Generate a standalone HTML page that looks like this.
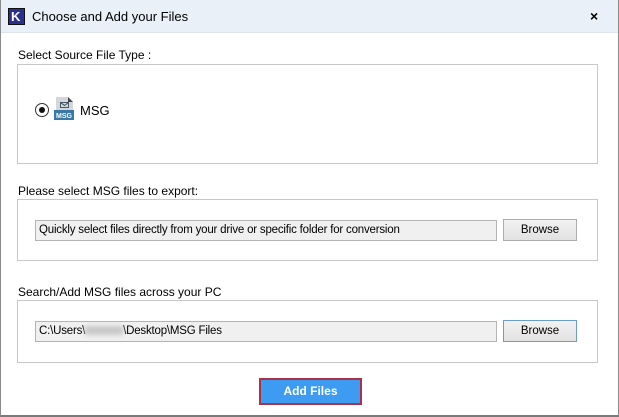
<!DOCTYPE html>
<html><head><style>
*{margin:0;padding:0;box-sizing:border-box}
body{width:619px;height:417px;background:#fff;font-family:"Liberation Sans",Arial,sans-serif;font-size:12px;color:#000;position:relative;overflow:hidden}
.win{position:absolute;left:0;top:0;width:619px;height:417px;border:1px solid #8a8a8a;border-top:none;border-bottom:2px solid #7a7a7a}
.title{position:absolute;left:0;top:0;width:619px;height:33px;background:#eaf0f8;border-bottom:1px solid #dfe5ee}
.abs{position:absolute}
.box{position:absolute;border:1px solid #c8c8c8;left:17px;width:581px}
.inp{position:absolute;height:21px;background:#f0f0f0;border:1px solid #b4b4b4;font-size:11.5px;line-height:19px;padding-left:3px;letter-spacing:-0.2px}
.btn{position:absolute;width:74px;height:22px;background:linear-gradient(#f2f2f2,#e2e2e2);border:1px solid #adadad;text-align:center;line-height:20px;font-size:11.5px}
</style></head><body>
<div class="title"></div>
<div class="abs" style="left:8px;top:8px;width:17px;height:17px;background:#2b2f8f;border:1px solid #111;color:#fff;font-weight:bold;font-size:13px;line-height:15px;padding-left:2px">K</div>
<div class="abs" style="left:32px;top:9px;font-size:13px">Choose and Add your Files</div>
<div class="abs" style="left:590px;top:8px;font-size:14px;font-weight:bold">×</div>
<div class="win"></div>

<div class="abs" style="left:18px;top:48px">Select Source File Type :</div>
<div class="box" style="top:64px;height:100px"></div>
<div class="abs" style="left:35px;top:103px;width:14px;height:14px;border:1px solid #333;border-radius:50%;background:#fff"></div>
<div class="abs" style="left:39px;top:107px;width:6px;height:6px;border-radius:50%;background:#111"></div>
<svg class="abs" style="left:54px;top:97px" width="21" height="25" viewBox="0 0 21 25">
<path d="M2 0H14L19 5V22H2Z" fill="#d3d7dc"/><path d="M14 0L19 5H14Z" fill="#444"/>
<rect x="6.5" y="5.5" width="8" height="5" fill="none" stroke="#3a4a5a" stroke-width="0.9"/><path d="M6.5 5.5L10.5 8.5L14.5 5.5" fill="none" stroke="#3a4a5a" stroke-width="0.9"/>
<rect x="0" y="13" width="20" height="10" fill="#3a78a8"/>
<text x="10" y="21" font-size="7" font-weight="bold" fill="#fff" text-anchor="middle" font-family="Liberation Sans">MSG</text>
</svg>
<div class="abs" style="left:80px;top:103px;font-size:13px">MSG</div>

<div class="abs" style="left:18px;top:184px">Please select MSG files to export:</div>
<div class="box" style="top:199px;height:62px"></div>
<div class="inp" style="left:35px;top:220px;width:462px">Quickly select files directly from your drive or specific folder for conversion</div>
<div class="btn" style="left:503px;top:219px">Browse</div>

<div class="abs" style="left:18px;top:285px">Search/Add MSG files across your PC</div>
<div class="box" style="top:300px;height:63px"></div>
<div class="inp" style="left:35px;top:321px;width:462px">C:\Users\<span style="display:inline-block;width:38px;height:9px;background:#c8c8c8;filter:blur(2px);vertical-align:middle"></span>\Desktop\MSG Files</div>
<div class="btn" style="left:503px;top:320px;border-color:#6b9ccf">Browse</div>

<div class="abs" style="left:259px;top:378px;width:103px;height:27px;border:2px solid #a8324a;background:#3d9bf2;color:#fff;font-weight:bold;text-align:center;line-height:23px;font-size:12px">Add Files</div>
</body></html>
